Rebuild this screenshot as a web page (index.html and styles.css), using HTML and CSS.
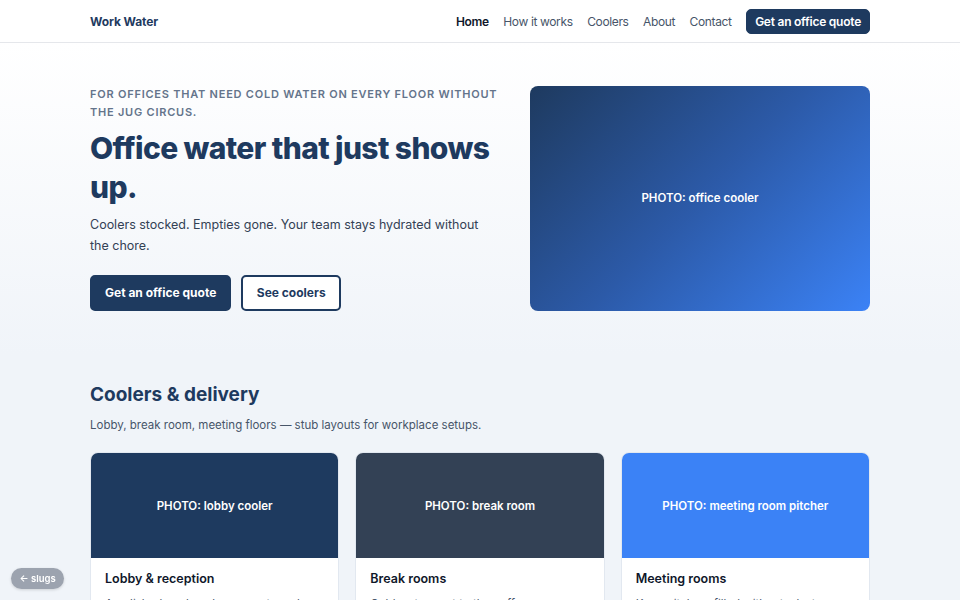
FILE: index.html
```html
<!DOCTYPE html>
<html lang="en">
<head>
    <meta charset="UTF-8">
    <meta name="viewport" content="width=device-width, initial-scale=1.0">
    <title>Work Water</title>
    <link rel="stylesheet" href="styles.css">
</head>
<body>
    <header class="topbar">
        <div class="wrap topbar-inner">
            <a class="brand" href="#">Work Water</a>
            <nav class="nav">
                <a class="nav-link active" href="#">Home</a>
                <a class="nav-link" href="#">How it works</a>
                <a class="nav-link" href="#">Coolers</a>
                <a class="nav-link" href="#">About</a>
                <a class="nav-link" href="#">Contact</a>
                <a class="btn btn-small" href="#">Get an office quote</a>
            </nav>
        </div>
    </header>

    <section class="hero">
        <div class="wrap hero-grid">
            <div class="hero-copy">
                <p class="eyebrow">For offices that need cold water on every floor without the jug circus.</p>
                <h1>Office water that just shows up.</h1>
                <p class="lead">Coolers stocked. Empties gone. Your team stays hydrated without the chore.</p>
                <div class="actions">
                    <a class="btn" href="#">Get an office quote</a>
                    <a class="btn btn-outline" href="#">See coolers</a>
                </div>
            </div>
            <div class="hero-photo">PHOTO: office cooler</div>
        </div>
    </section>

    <section class="coolers">
        <div class="wrap">
            <h2>Coolers &amp; delivery</h2>
            <p class="section-sub">Lobby, break room, meeting floors — stub layouts for workplace setups.</p>
            <div class="cards">
                <div class="card">
                    <div class="card-photo navy">PHOTO: lobby cooler</div>
                    <div class="card-body">
                        <h3>Lobby &amp; reception</h3>
                        <p>A polished cooler where guests and staff both notice it's always full.</p>
                    </div>
                </div>
                <div class="card">
                    <div class="card-photo slate">PHOTO: break room</div>
                    <div class="card-body">
                        <h3>Break rooms</h3>
                        <p>Cold water next to the coffee — no empty jugs left in the corner.</p>
                    </div>
                </div>
                <div class="card">
                    <div class="card-photo blue">PHOTO: meeting room pitcher</div>
                    <div class="card-body">
                        <h3>Meeting rooms</h3>
                        <p>Keep pitchers filled without a last-minute run before the client call.</p>
                    </div>
                </div>
            </div>
        </div>
    </section>

    <a class="slugs" href="#">← slugs</a>
</body>
</html>
```

FILE: styles.css
```css
* {
    box-sizing: border-box;
}
body {
    margin: 0;
    font-family: Inter, "Noto Sans", Arial, sans-serif;
    background-color: #f0f4f9;
    color: #0f172a;
}
a {
    text-decoration: none;
}
.wrap {
    width: 780px;
    margin: 0 auto;
}

/* top bar */
.topbar {
    background-color: white;
    border-bottom: 1px solid #e5e7eb;
}
.topbar-inner {
    height: 42px;
    display: flex;
    align-items: center;
    justify-content: space-between;
}
.brand {
    font-size: 12px;
    font-weight: 700;
    letter-spacing: -0.01em;
    color: #1e3a5f;
}
.nav {
    display: flex;
    align-items: center;
    gap: 14.5px;
}
.nav-link {
    font-size: 12px;
    letter-spacing: -0.03em;
    color: #475569;
}
.nav-link.active {
    color: #0f172a;
    font-weight: 600;
}

/* buttons */
.btn {
    display: inline-block;
    background-color: #1e3a5f;
    color: white;
    font-size: 12px;
    font-weight: 700;
    padding: 0 13px;
    height: 36px;
    line-height: 32px;
    border-radius: 5px;
    border: 2px solid #1e3a5f;
}
.btn-outline {
    background-color: white;
    color: #1e3a5f;
    padding: 0 13.5px;
}
.btn-small {
    height: 25px;
    line-height: 23px;
    padding: 0 8px;
    border-width: 1px;
    font-weight: 600;
    letter-spacing: -0.02em;
}

/* hero */
.hero {
    background: linear-gradient(180deg, #ffffff 0%, #f0f4f9 100%);
    padding: 42px 0 44px;
}
.hero-grid {
    display: grid;
    grid-template-columns: 1fr 340px;
    gap: 30px;
    align-items: center;
}
.eyebrow {
    margin: 0 0 8px;
    font-size: 11px;
    line-height: 18px;
    font-weight: 600;
    text-transform: uppercase;
    letter-spacing: 0.07em;
    color: #64748b;
}
h1 {
    margin: 0 0 7px;
    font-size: 30px;
    line-height: 39px;
    font-weight: 800;
    letter-spacing: -0.02em;
    color: #1e3a5f;
}
.lead {
    margin: 0 0 19px;
    font-size: 12.5px;
    line-height: 21px;
    color: #334155;
}
.actions {
    display: flex;
    gap: 10px;
}
.hero-photo {
    height: 225px;
    border-radius: 8px;
    background: linear-gradient(135deg, #1e3a5f 0%, #2c5aa8 50%, #3b82f6 100%);
    color: white;
    font-size: 11.5px;
    font-weight: 600;
    display: flex;
    align-items: center;
    justify-content: center;
}

/* coolers */
.coolers {
    padding: 28px 0 40px;
}
h2 {
    margin: 0 0 9px;
    font-size: 19px;
    line-height: 24px;
    font-weight: 700;
    color: #1e3a5f;
}
.section-sub {
    margin: 0 0 18px;
    font-size: 11.5px;
    line-height: 18px;
    color: #475569;
}
.cards {
    display: grid;
    grid-template-columns: repeat(3, 1fr);
    gap: 16px;
}
.card {
    background-color: white;
    border: 1px solid #e2e8f0;
    border-radius: 8px;
    overflow: hidden;
}
.card-photo {
    height: 105px;
    display: flex;
    align-items: center;
    justify-content: center;
    color: white;
    font-size: 11.5px;
    font-weight: 600;
}
.navy { background-color: #1e3a5f; }
.slate { background-color: #334155; }
.blue { background-color: #3b82f6; }
.card-body {
    padding: 13px 14px 16px;
}
.card-body h3 {
    margin: 0 0 8px;
    font-size: 12.5px;
    line-height: 16px;
    font-weight: 600;
    color: #0f172a;
}
.card-body p {
    margin: 0;
    font-size: 11.5px;
    line-height: 18px;
    color: #475569;
}

.slugs {
    position: fixed;
    left: 11px;
    bottom: 11px;
    background-color: #9ca3af;
    color: white;
    font-size: 9.5px;
    line-height: 13px;
    font-weight: 600;
    padding: 4px 8.5px;
    border-radius: 11px;
    box-shadow: 0 1px 3px rgba(0, 0, 0, 0.15);
}
```
